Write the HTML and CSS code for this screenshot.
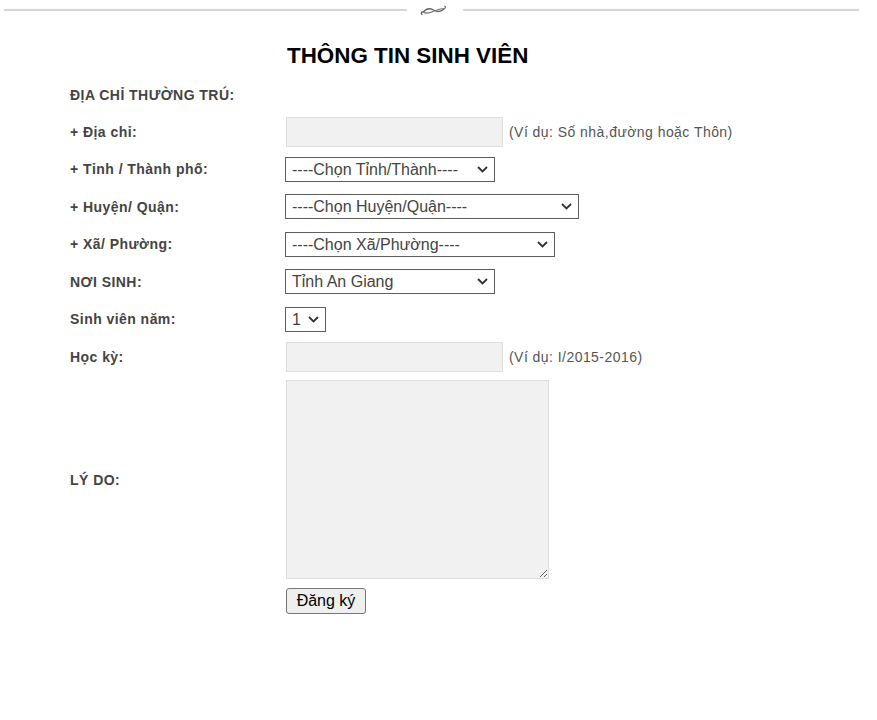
FILE: index.html
```html
<!DOCTYPE html>
<html lang="vi">
<head>
<meta charset="utf-8">
<title>Thông tin sinh viên</title>
<link rel="stylesheet" href="styles.css">
</head>
<body>
<div class="divider">
  <span class="line line-left"></span>
  <svg class="ornament" width="28" height="14" viewBox="0 0 28 14">
    <path d="M3 11.5 C1.5 10.5 2.5 8.5 4.2 9.2 C7 5.5 11 5 14.5 7 C18 9 22 9.5 25.5 5.5" fill="none" stroke="#666" stroke-width="1.4" stroke-linecap="round"/>
    <path d="M4.2 9.2 C7.5 11 11 10 14.5 8.3 C18 6.6 21.5 5.5 25.5 5.5 C27 4.5 26.8 3 25.6 3.3" fill="none" stroke="#777" stroke-width="1.1" stroke-linecap="round"/>
  </svg>
  <span class="line line-right"></span>
</div>

<form class="form">
  <div class="spacer"></div>
  <h1 class="title">THÔNG TIN SINH VIÊN</h1>

  <div class="label">ĐỊA CHỈ THƯỜNG TRÚ:</div>
  <div class="field"></div>

  <div class="label">+ Địa chỉ:</div>
  <div class="field"><input type="text" class="text-input"><span class="hint">(Ví dụ: Số nhà,đường hoặc Thôn)</span></div>

  <div class="label">+ Tỉnh / Thành phố:</div>
  <div class="field"><select class="select sel-tinh"><option>----Chọn Tỉnh/Thành----</option></select></div>

  <div class="label">+ Huyện/ Quận:</div>
  <div class="field"><select class="select sel-huyen"><option>----Chọn Huyện/Quận----</option></select></div>

  <div class="label">+ Xã/ Phường:</div>
  <div class="field"><select class="select sel-xa"><option>----Chọn Xã/Phường----</option></select></div>

  <div class="label">NƠI SINH:</div>
  <div class="field"><select class="select sel-noisinh"><option>Tỉnh An Giang</option></select></div>

  <div class="label">Sinh viên năm:</div>
  <div class="field"><select class="select sel-nam"><option>1</option></select></div>

  <div class="label">Học kỳ:</div>
  <div class="field"><input type="text" class="text-input"><span class="hint">(Ví dụ: I/2015-2016)</span></div>

  <div class="label">LÝ DO:</div>
  <div class="field field-area"><textarea class="textarea"></textarea></div>

  <div class="spacer"></div>
  <div class="field field-btn"><button type="button" class="button">Đăng ký</button></div>
</form>
</body>
</html>
```

FILE: styles.css
```css
html, body {
  margin: 0;
  padding: 0;
  background: #fff;
  font-family: "Liberation Sans", Arial, sans-serif;
}

.divider {
  display: flex;
  align-items: center;
  height: 20px;
  padding: 0 18px 0 4px;
}

.line {
  display: block;
  height: 2px;
  background: #d6d6d6;
}

.line-left { width: 403px; }
.line-right { flex: 1; }

.ornament {
  display: block;
  margin: 0 16px 0 12px;
}

.form {
  display: grid;
  grid-template-columns: 216px auto;
  grid-template-rows: auto 36.5px repeat(7, 37.5px) auto auto;
  align-items: center;
  padding-left: 70px;
}

.title {
  margin: 0;
  padding: 23px 0 7.5px 1px;
  font-size: 22.4px;
  font-weight: bold;
  color: #000;
  line-height: 1.15;
}

.label {
  font-size: 14px;
  font-weight: bold;
  color: #444;
  letter-spacing: 0.45px;
}

.field {
  display: flex;
  align-items: center;
}

.text-input {
  box-sizing: border-box;
  width: 217px;
  height: 30px;
  margin: 0;
  border: 1px solid #dedede;
  background: #f1f1f1;
  padding: 2px 6px;
  font-size: 14px;
}

.hint {
  margin-left: 6px;
  font-size: 14px;
  color: #555;
  letter-spacing: 0.45px;
}

.select {
  -webkit-appearance: none;
  appearance: none;
  box-sizing: border-box;
  height: 25px;
  margin: 0 0 0 -1px;
  padding: 0 24px 0 6px;
  font-family: "Liberation Sans", Arial, sans-serif;
  font-size: 16px;
  color: #444;
  background-color: #fff;
  background-image: url("data:image/svg+xml;utf8,<svg xmlns='http://www.w3.org/2000/svg' width='11' height='7' viewBox='0 0 11 7'><polyline points='1,1 5.5,5.5 10,1' fill='none' stroke='%23333' stroke-width='1.8'/></svg>");
  background-repeat: no-repeat;
  background-position: right 6px center;
  background-size: 11px 7px;
  border: 1px solid #5e5e5e;
  border-radius: 0;
}

.sel-tinh { width: 210px; }
.sel-huyen { width: 294px; }
.sel-xa { width: 270px; }
.sel-noisinh { width: 210px; }
.sel-nam { width: 41px; }

.field-area {
  padding: 4.75px 0 5px;
}

.textarea {
  box-sizing: border-box;
  display: block;
  width: 263px;
  height: 199px;
  margin: 0;
  border: 1px solid #dedede;
  background: #f1f1f1;
  resize: both;
}

.field-btn {
  padding-top: 4px;
  align-self: start;
}

.button {
  box-sizing: border-box;
  width: 80px;
  height: 26px;
  margin: 0;
  padding: 0 6px;
  font-family: "Liberation Sans", Arial, sans-serif;
  font-size: 16px;
  color: #000;
  background: #efefef;
  border: 1px solid #767676;
  border-radius: 3px;
}
```
